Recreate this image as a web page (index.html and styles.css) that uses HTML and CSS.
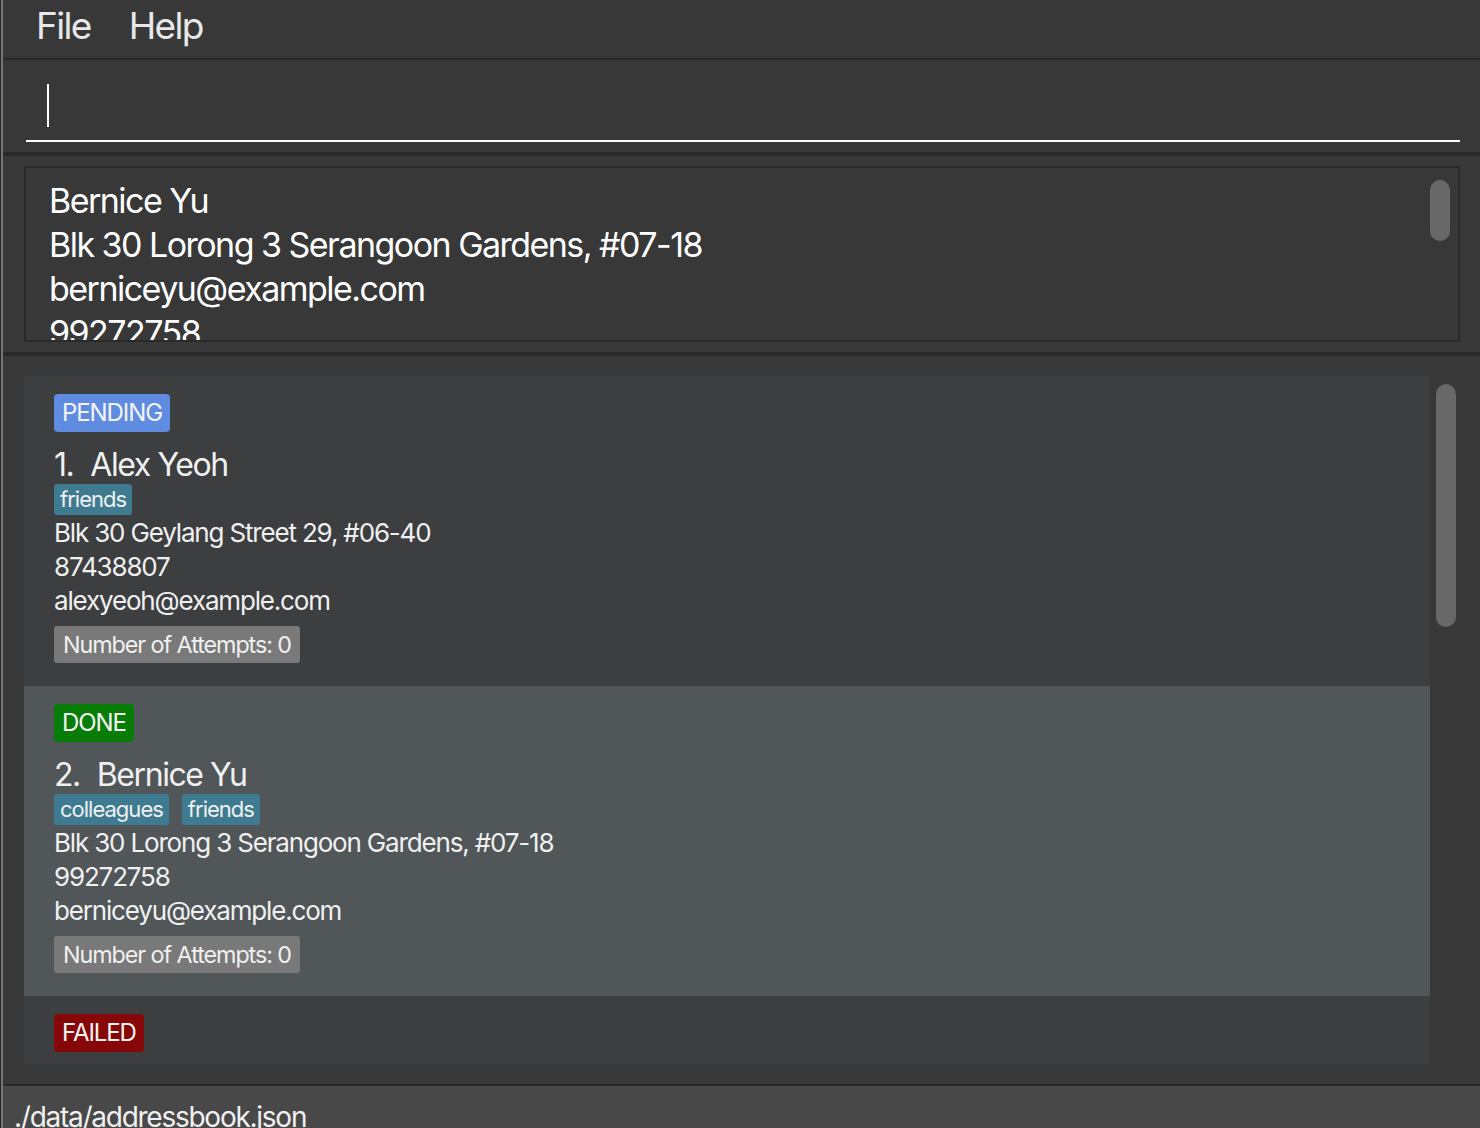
FILE: index.html
```html
<!DOCTYPE html>
<html lang="en">
<head>
<meta charset="utf-8">
<title>Address Book</title>
<link rel="stylesheet" href="styles.css">
</head>
<body>
<div class="window">
  <div class="app">
    <nav class="menubar">
      <span class="menu-item">File</span>
      <span class="menu-item">Help</span>
    </nav>
    <section class="command">
      <div class="command-box"><span class="caret"></span></div>
    </section>
    <section class="result">
      <div class="result-box">
        <div class="result-text">
          <div>Bernice Yu</div>
          <div>Blk 30 Lorong 3 Serangoon Gardens, #07-18</div>
          <div>berniceyu@example.com</div>
          <div>99272758</div>
        </div>
        <div class="thumb result-thumb"></div>
      </div>
    </section>
    <section class="list-area">
      <div class="list">
        <div class="card card-even">
          <span class="badge badge-pending">PENDING</span>
          <div class="name"><span class="index">1.</span>Alex Yeoh</div>
          <div class="tags"><span class="tag">friends</span></div>
          <div class="info">Blk 30 Geylang Street 29, #06-40</div>
          <div class="info">87438807</div>
          <div class="info">alexyeoh@example.com</div>
          <span class="attempts">Number of Attempts: 0</span>
        </div>
        <div class="card card-odd">
          <span class="badge badge-done">DONE</span>
          <div class="name"><span class="index">2.</span>Bernice Yu</div>
          <div class="tags"><span class="tag">colleagues</span><span class="tag">friends</span></div>
          <div class="info">Blk 30 Lorong 3 Serangoon Gardens, #07-18</div>
          <div class="info">99272758</div>
          <div class="info">berniceyu@example.com</div>
          <span class="attempts">Number of Attempts: 0</span>
        </div>
        <div class="card card-even">
          <span class="badge badge-failed">FAILED</span>
          <div class="name"><span class="index">3.</span>Charlotte Oliveiro</div>
          <div class="tags"><span class="tag">neighbours</span></div>
          <div class="info">Blk 11 Ang Mo Kio Street 74, #11-04</div>
          <div class="info">93210283</div>
          <div class="info">charlotte@example.com</div>
          <span class="attempts">Number of Attempts: 0</span>
        </div>
      </div>
      <div class="list-scroll"><div class="thumb list-thumb"></div></div>
    </section>
    <footer class="status">./data/addressbook.json</footer>
  </div>
</div>
</body>
</html>
```
FILE: styles.css
```css
* {
  box-sizing: border-box;
  letter-spacing: -0.045em;
}
html, body {
  margin: 0;
  padding: 0;
  width: 1480px;
  height: 1128px;
  overflow: hidden;
  background: #383838;
  font-family: Inter, "Noto Sans", sans-serif;
  color: #f0f0f0;
}
.window {
  height: 1128px;
  border-left: 1px solid #24242c;
}
.app {
  height: 100%;
  border-left: 2px solid #767676;
  display: flex;
  flex-direction: column;
  background: #383838;
}
.menubar {
  height: 60px;
  flex: none;
  border-bottom: 2px solid #292929;
  display: flex;
  align-items: flex-start;
  gap: 38px;
  padding-left: 33px;
}
.menu-item {
  font-size: 37px;
  line-height: 52px;
  color: #e8e8e8;
}
.command {
  height: 96px;
  flex: none;
  padding: 0 20px 0 23px;
  border-bottom: 4px solid #292929;
}
.command-box {
  height: 82px;
  border-bottom: 2px solid #ffffff;
  padding: 24px 0 0 21px;
}
.caret {
  display: block;
  width: 2px;
  height: 43px;
  background: #ffffff;
}
.result {
  height: 200px;
  flex: none;
  padding: 10px 20px 10px 21px;
  border-bottom: 4px solid #292929;
}
.result-box {
  position: relative;
  height: 176px;
  border: 2px solid #2a2a2a;
  overflow: hidden;
}
.result-text {
  padding: 11px 0 0 23px;
  font-size: 34px;
  line-height: 44px;
  color: #ffffff;
}
.thumb {
  background: #686868;
  border-radius: 10px;
}
.result-thumb {
  position: absolute;
  left: 1404px;
  top: 12px;
  width: 20px;
  height: 61px;
}
.list-area {
  height: 730px;
  flex: none;
  display: flex;
  padding: 20px 20px 20px 21px;
  border-bottom: 2px solid #292929;
}
.list {
  width: 1406px;
  flex: none;
  overflow: hidden;
}
.list-scroll {
  flex: 1;
  padding: 8px 4px 0 6px;
}
.list-thumb {
  height: 243px;
}
.card {
  height: 310px;
  padding: 18px 30px 0 30px;
  display: flex;
  flex-direction: column;
  align-items: flex-start;
}
.card-even { background: #3c3e40; }
.card-odd { background: #515659; }
.badge {
  height: 38px;
  line-height: 38px;
  font-size: 24px;
  padding: 0 8px;
  border-radius: 4px;
  color: #f4f4f4;
}
.badge-pending { background: #5f8ce0; }
.badge-done { background: #077d07; }
.badge-failed { background: #850707; }
.name {
  margin-top: 13px;
  font-size: 32px;
  line-height: 40px;
  margin-bottom: -1px;
}
.index {
  margin-right: 17px;
}
.tags {
  display: flex;
  gap: 13px;
  height: 31px;
}
.tag {
  background: #3e7b91;
  border-radius: 3px;
  font-size: 22px;
  line-height: 31px;
  padding: 0 6px;
}
.info {
  font-size: 26px;
  line-height: 34px;
}
.tags + .info { margin-top: 0.5px; }
.attempts {
  margin-top: 8px;
  height: 37px;
  line-height: 37px;
  font-size: 23.3px;
  padding: 0 9px;
  background: #797979;
  border-radius: 3px;
}
.status {
  flex: 1;
  background: #484848;
  font-size: 28px;
  line-height: 40px;
  padding-left: 11px;
  padding-top: 11px;
  color: #f0f0f0;
  overflow: hidden;
}
```
